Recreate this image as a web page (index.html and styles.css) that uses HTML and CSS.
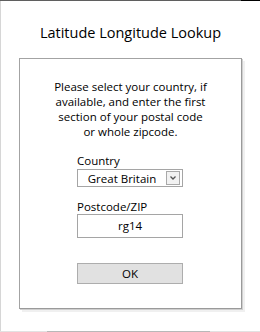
FILE: index.html
```html
<!DOCTYPE html>
<html>
<head>
<meta charset="utf-8">
<link rel="stylesheet" href="styles.css">
</head>
<body>
<div class="window">
  <div class="topline"></div>
  <h1 class="title">Latitude Longitude Lookup</h1>
  <div class="panel">
    <p class="intro">Please select your country, if<br>available, and enter the first<br>section of your postal code<br>or whole zipcode.</p>
    <div class="form">
      <label class="label">Country</label>
      <div class="select">
        <span class="select-text">Great Britain</span>
        <span class="drop"><svg width="8" height="6" viewBox="0 0 8 6"><path d="M1.5 1.5 L4 4 L6.5 1.5" fill="none" stroke="#555" stroke-width="1.3"/></svg></span>
      </div>
      <label class="label label-zip">Postcode/ZIP</label>
      <div class="input">rg14</div>
      <button class="ok">OK</button>
    </div>
  </div>
  <div class="bottomline"></div>
</div>
</body>
</html>
```

FILE: styles.css
```css
html, body {
  margin: 0;
  padding: 0;
  background: #fff;
}
.window {
  width: 260px;
  height: 332px;
  box-sizing: border-box;
  display: flex;
  flex-direction: column;
  background: #fff;
  box-shadow: inset 1px 0 0 #d6d6d6;
  font-family: "Open Sans", "Noto Sans", sans-serif;
  color: #000;
}
.topline {
  height: 1px;
  flex: none;
  background: linear-gradient(90deg, #5f5f5f 241px, #000 241px);
}
.title {
  margin: 22px 0 0;
  font-size: 14.5px;
  font-weight: normal;
  line-height: 20px;
  text-align: center;
  padding-left: 1px;
}
.panel {
  margin: 15px 0 0 19px;
  width: 223px;
  height: 251px;
  box-sizing: border-box;
  border: 1px solid #a3a3a3;
  border-right-color: #9a9a9a;
  border-bottom-color: #9a9a9a;
  box-shadow: 1px 1px 0 #cfcfcf, 3px 3px 0 #f0f0f0;
  padding-top: 20px;
}
.intro {
  margin: 0;
  font-size: 11.5px;
  line-height: 15px;
  text-align: center;
}
.form {
  margin: 14px 0 0 57px;
  width: 106px;
  display: flex;
  flex-direction: column;
}
.label {
  font-size: 11.5px;
  line-height: 15px;
}
.select {
  margin-top: 1px;
  height: 18px;
  box-sizing: border-box;
  border: 1px solid #a5a5a5;
  display: flex;
  align-items: center;
  padding: 0 2px 0 0;
}
.select-text {
  flex: 1;
  text-align: center;
  font-size: 11.5px;
  line-height: 15px;
}
.drop {
  width: 14px;
  height: 14px;
  box-sizing: border-box;
  border: 1px solid #a9a9a9;
  background: #f2f2f2;
  display: flex;
  align-items: center;
  justify-content: center;
}
.label-zip {
  margin-top: 12px;
}
.input {
  height: 24px;
  box-sizing: border-box;
  border: 1px solid #a5a5a5;
  text-align: center;
  font-size: 11.5px;
  line-height: 22px;
}
.ok {
  margin-top: 25px;
  height: 21px;
  width: 106px;
  box-sizing: border-box;
  border: 1px solid #adadad;
  background: #e1e1e1;
  font-family: inherit;
  font-size: 11.5px;
  line-height: 17px;
  padding: 0;
  color: #000;
}
.bottomline {
  margin-top: auto;
  height: 1px;
  flex: none;
  background: linear-gradient(90deg, #e2e2e2 47px, #b8b8b8 47px, #b8b8b8 210px, #e2e2e2 210px);
}
```
